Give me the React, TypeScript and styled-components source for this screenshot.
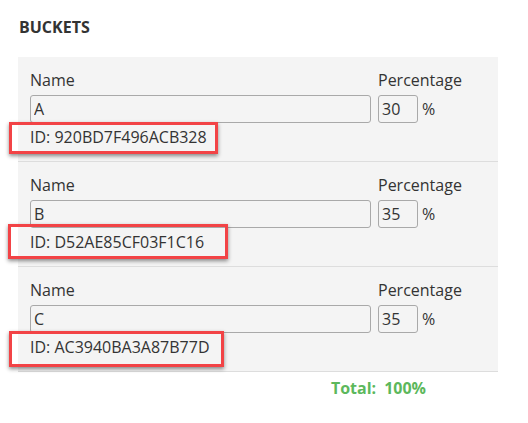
import React from "react";
import styled, { createGlobalStyle } from "styled-components";

const GlobalStyle = createGlobalStyle`
  html, body { margin: 0; padding: 0; background: #ffffff; }
  body { font-family: "Open Sans", "Liberation Sans", sans-serif; color: #333333; }
`;

const Page = styled.div`
  padding: 16px 30px 0 18px;
  width: 480px;
`;

const Heading = styled.h3`
  margin: 0 0 19px 1px;
  font-size: 16px;
  line-height: 22px;
  font-weight: 700;
  color: #333333;
`;

const Panel = styled.div`
  background: #f4f4f4;
  border-bottom: 1px solid #dddddd;
  padding: 12px 12px 13px 12px;
  display: flex;
  flex-direction: column;
  gap: 3px;
`;

const FieldRow = styled.div`
  display: flex;
  gap: 7px;
`;

const Field = styled.div<{ $grow?: boolean }>`
  display: flex;
  flex-direction: column;
  gap: 4px;
  flex: ${(p) => (p.$grow ? "0 0 341px" : "0 0 auto")};
`;

const Label = styled.label`
  font-size: 16px;
  line-height: 22px;
  color: #333333;
`;

const InputLine = styled.div`
  display: flex;
  align-items: center;
  gap: 4px;
`;

const TextInput = styled.input<{ $w: number }>`
  box-sizing: border-box;
  width: ${(p) => p.$w}px;
  height: 28px;
  margin: 0;
  padding: 0 3px;
  border: 1px solid #a9a9a9;
  border-radius: 3px;
  background: transparent;
  font-family: "Open Sans", "Liberation Sans", sans-serif;
  font-size: 16px;
  color: #333333;
  outline: none;
`;

const Unit = styled.span`
  font-size: 16px;
  line-height: 22px;
  color: #333333;
`;

const IdRow = styled.div`
  position: relative;
  font-size: 16px;
  line-height: 22px;
  color: #333333;
`;

const Highlight = styled.div`
  position: absolute;
  box-sizing: border-box;
  border: 3px solid #f24346;
  box-shadow: 0 2px 4px rgba(0, 0, 0, 0.45);
  pointer-events: none;
`;

const TotalRow = styled.div`
  display: flex;
  justify-content: flex-end;
  gap: 8px;
  padding: 5px 72px 0 0;
  font-size: 16px;
  line-height: 22px;
  font-weight: 700;
  color: #5cb85c;
`;

type Bucket = {
  name: string;
  pct: string;
  id: string;
  box: { top: number; left: number; width: number; height: number };
};

const buckets: Bucket[] = [
  { name: "A", pct: "30", id: "920BD7F496ACB328", box: { top: -4, left: -21, width: 209, height: 32 } },
  { name: "B", pct: "35", id: "D52AE85CF03F1C16", box: { top: -7, left: -22, width: 220, height: 35 } },
  { name: "C", pct: "35", id: "AC3940BA3A87B77D", box: { top: -5, left: -21, width: 215, height: 36 } },
];

export default function App() {
  return (
    <>
      <GlobalStyle />
      <Page>
        <Heading>BUCKETS</Heading>
        {buckets.map((b) => (
          <Panel key={b.id}>
            <FieldRow>
              <Field $grow>
                <Label>Name</Label>
                <TextInput $w={341} defaultValue={b.name} />
              </Field>
              <Field>
                <Label>Percentage</Label>
                <InputLine>
                  <TextInput $w={40} defaultValue={b.pct} />
                  <Unit>%</Unit>
                </InputLine>
              </Field>
            </FieldRow>
            <IdRow>
              ID: {b.id}
              <Highlight style={b.box} />
            </IdRow>
          </Panel>
        ))}
        <TotalRow>
          <span>Total:</span>
          <span>100%</span>
        </TotalRow>
      </Page>
    </>
  );
}
